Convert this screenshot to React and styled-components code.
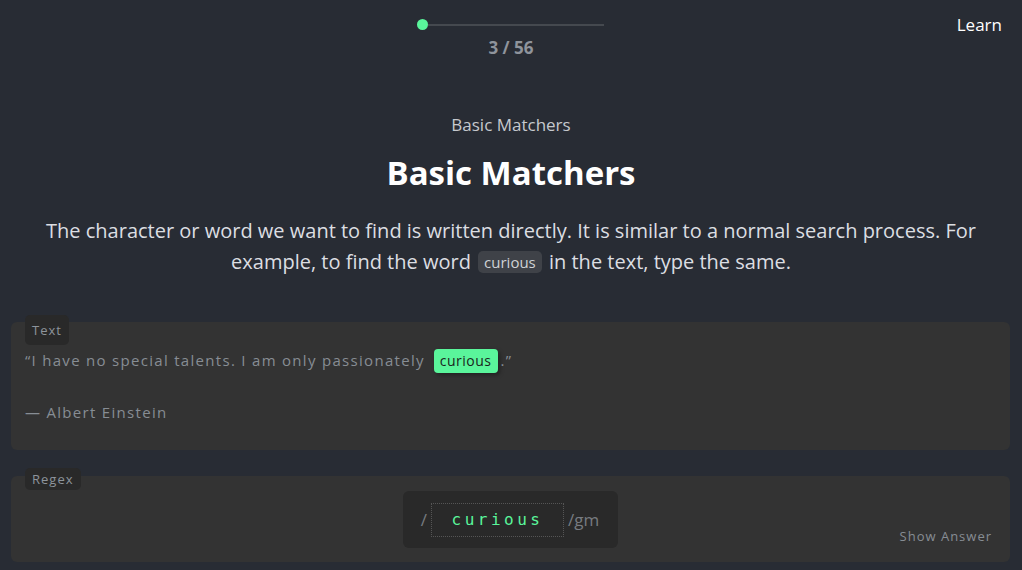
import React from "react";
import styled, { createGlobalStyle } from "styled-components";

const GlobalStyle = createGlobalStyle`
  html, body {
    margin: 0;
    padding: 0;
    background: #282c34;
    font-family: "Open Sans", "Noto Sans", sans-serif;
  }
`;

const Page = styled.div`
  min-height: 570px;
  background: #282c34;
`;

const Header = styled.header`
  display: grid;
  grid-template-columns: 1fr auto 1fr;
  height: 59px;
`;

const ProgressWrap = styled.div`
  grid-column: 2;
  display: flex;
  flex-direction: column;
  align-items: center;
  padding-top: 19px;
`;

const Track = styled.div`
  position: relative;
  width: 186px;
  height: 11px;
  display: flex;
  align-items: center;
`;

const Line = styled.div`
  width: 100%;
  height: 2px;
  background: #45494f;
`;

const Dot = styled.span`
  position: absolute;
  left: -1px;
  top: 0;
  width: 11px;
  height: 11px;
  border-radius: 50%;
  background: #5af59b;
`;

const Counter = styled.div`
  margin-top: 7px;
  font-size: 17px;
  line-height: 22px;
  font-weight: 700;
  color: #8f949c;
`;

const LearnLink = styled.a`
  grid-column: 3;
  justify-self: end;
  align-self: start;
  margin: 13px 20px 0 0;
  font-size: 17px;
  line-height: 24px;
  color: #ffffff;
  text-decoration: none;
  cursor: pointer;
`;

const Intro = styled.section`
  display: flex;
  flex-direction: column;
  align-items: center;
  text-align: center;
  padding: 55px 40px 0;
`;

const Subtitle = styled.div`
  font-size: 17px;
  line-height: 22px;
  color: #c6c9ce;
`;

const Title = styled.h1`
  margin: 14px 0 0;
  font-size: 33px;
  line-height: 46px;
  font-weight: 700;
  color: #ffffff;
`;

const Description = styled.p`
  margin: 19px 0 0;
  max-width: 940px;
  font-size: 20px;
  line-height: 31px;
  color: #dcdee2;
`;

const Code = styled.code`
  display: inline-block;
  font-family: "Open Sans", "Noto Sans", sans-serif;
  font-size: 15px;
  line-height: 22px;
  padding: 0 6px;
  margin: 0 2px;
  border-radius: 5px;
  background: #3f4248;
  color: #cfd2d6;
  vertical-align: 1px;
`;

const Panels = styled.div`
  display: flex;
  flex-direction: column;
  gap: 26px;
  padding: 45px 12px 0 11px;
`;

const Panel = styled.div`
  position: relative;
  background: #333333;
  border-radius: 6px;
  padding: ${(p) => p.$pad};
`;

const Badge = styled.span`
  position: absolute;
  top: ${(p) => p.$top};
  left: 14px;
  height: ${(p) => p.$h};
  padding: 0 7px;
  display: flex;
  align-items: center;
  border-radius: 5px;
  background: #292929;
  color: #8d949b;
  font-size: 13px;
  letter-spacing: 1px;
`;

const Quote = styled.div`
  font-size: 15px;
  line-height: 26px;
  letter-spacing: 1.3px;
  color: #878d94;
`;

const Highlight = styled.span`
  display: inline-block;
  margin: 0 3px 0 9px;
  padding: 0 6px;
  line-height: 24px;
  border-radius: 4px;
  background: #5af59b;
  color: #1b1f1c;
  font-size: 14px;
  letter-spacing: 0.5px;
  box-shadow: 2px 2px 4px rgba(0, 0, 0, 0.35);
`;

const RegexRow = styled.div`
  display: grid;
  grid-template-columns: 1fr auto 1fr;
  align-items: end;
`;

const RegexBox = styled.div`
  grid-column: 2;
  display: flex;
  align-items: center;
  height: 57px;
  padding: 0 19px 0 18px;
  box-sizing: border-box;
  border-radius: 6px;
  background: #292929;
  color: #777b80;
  font-size: 17px;
`;

const Slash = styled.span`
  margin-right: 4px;
`;

const RegexInput = styled.input`
  width: 133px;
  height: 34px;
  box-sizing: border-box;
  margin-right: 4px;
  border: 1px dotted #555;
  background: transparent;
  color: #5af59b;
  text-align: center;
  font-family: "DejaVu Sans Mono", monospace;
  font-size: 16px;
  letter-spacing: 3.5px;
  outline: none;
`;

const ShowAnswer = styled.button`
  grid-column: 3;
  justify-self: end;
  margin: 0 18px 3px 0;
  padding: 0;
  border: none;
  background: none;
  color: #878d94;
  font-family: "Open Sans", "Noto Sans", sans-serif;
  font-size: 13px;
  letter-spacing: 1px;
  cursor: pointer;
`;

export default function App() {
  return (
    <Page>
      <GlobalStyle />
      <Header>
        <ProgressWrap>
          <Track>
            <Line />
            <Dot />
          </Track>
          <Counter>3 / 56</Counter>
        </ProgressWrap>
        <LearnLink>Learn</LearnLink>
      </Header>

      <Intro>
        <Subtitle>Basic Matchers</Subtitle>
        <Title>Basic Matchers</Title>
        <Description>
          The character or word we want to find is written directly. It is
          similar to a normal search process. For example, to find the word{" "}
          <Code>curious</Code> in the text, type the same.
        </Description>
      </Intro>

      <Panels>
        <Panel $pad="25px 14px 25px">
          <Badge $top="-7px" $h="30px">Text</Badge>
          <Quote>
            “I have no special talents. I am only passionately
            <Highlight>curious</Highlight>.”
            <br />
            <br />— Albert Einstein
          </Quote>
        </Panel>

        <Panel $pad="15px 0 14px">
          <Badge $top="-8px" $h="22px">Regex</Badge>
          <RegexRow>
            <RegexBox>
              <Slash>/</Slash>
              <RegexInput defaultValue="curious" />
              <span>/gm</span>
            </RegexBox>
            <ShowAnswer>Show Answer</ShowAnswer>
          </RegexRow>
        </Panel>
      </Panels>
    </Page>
  );
}
